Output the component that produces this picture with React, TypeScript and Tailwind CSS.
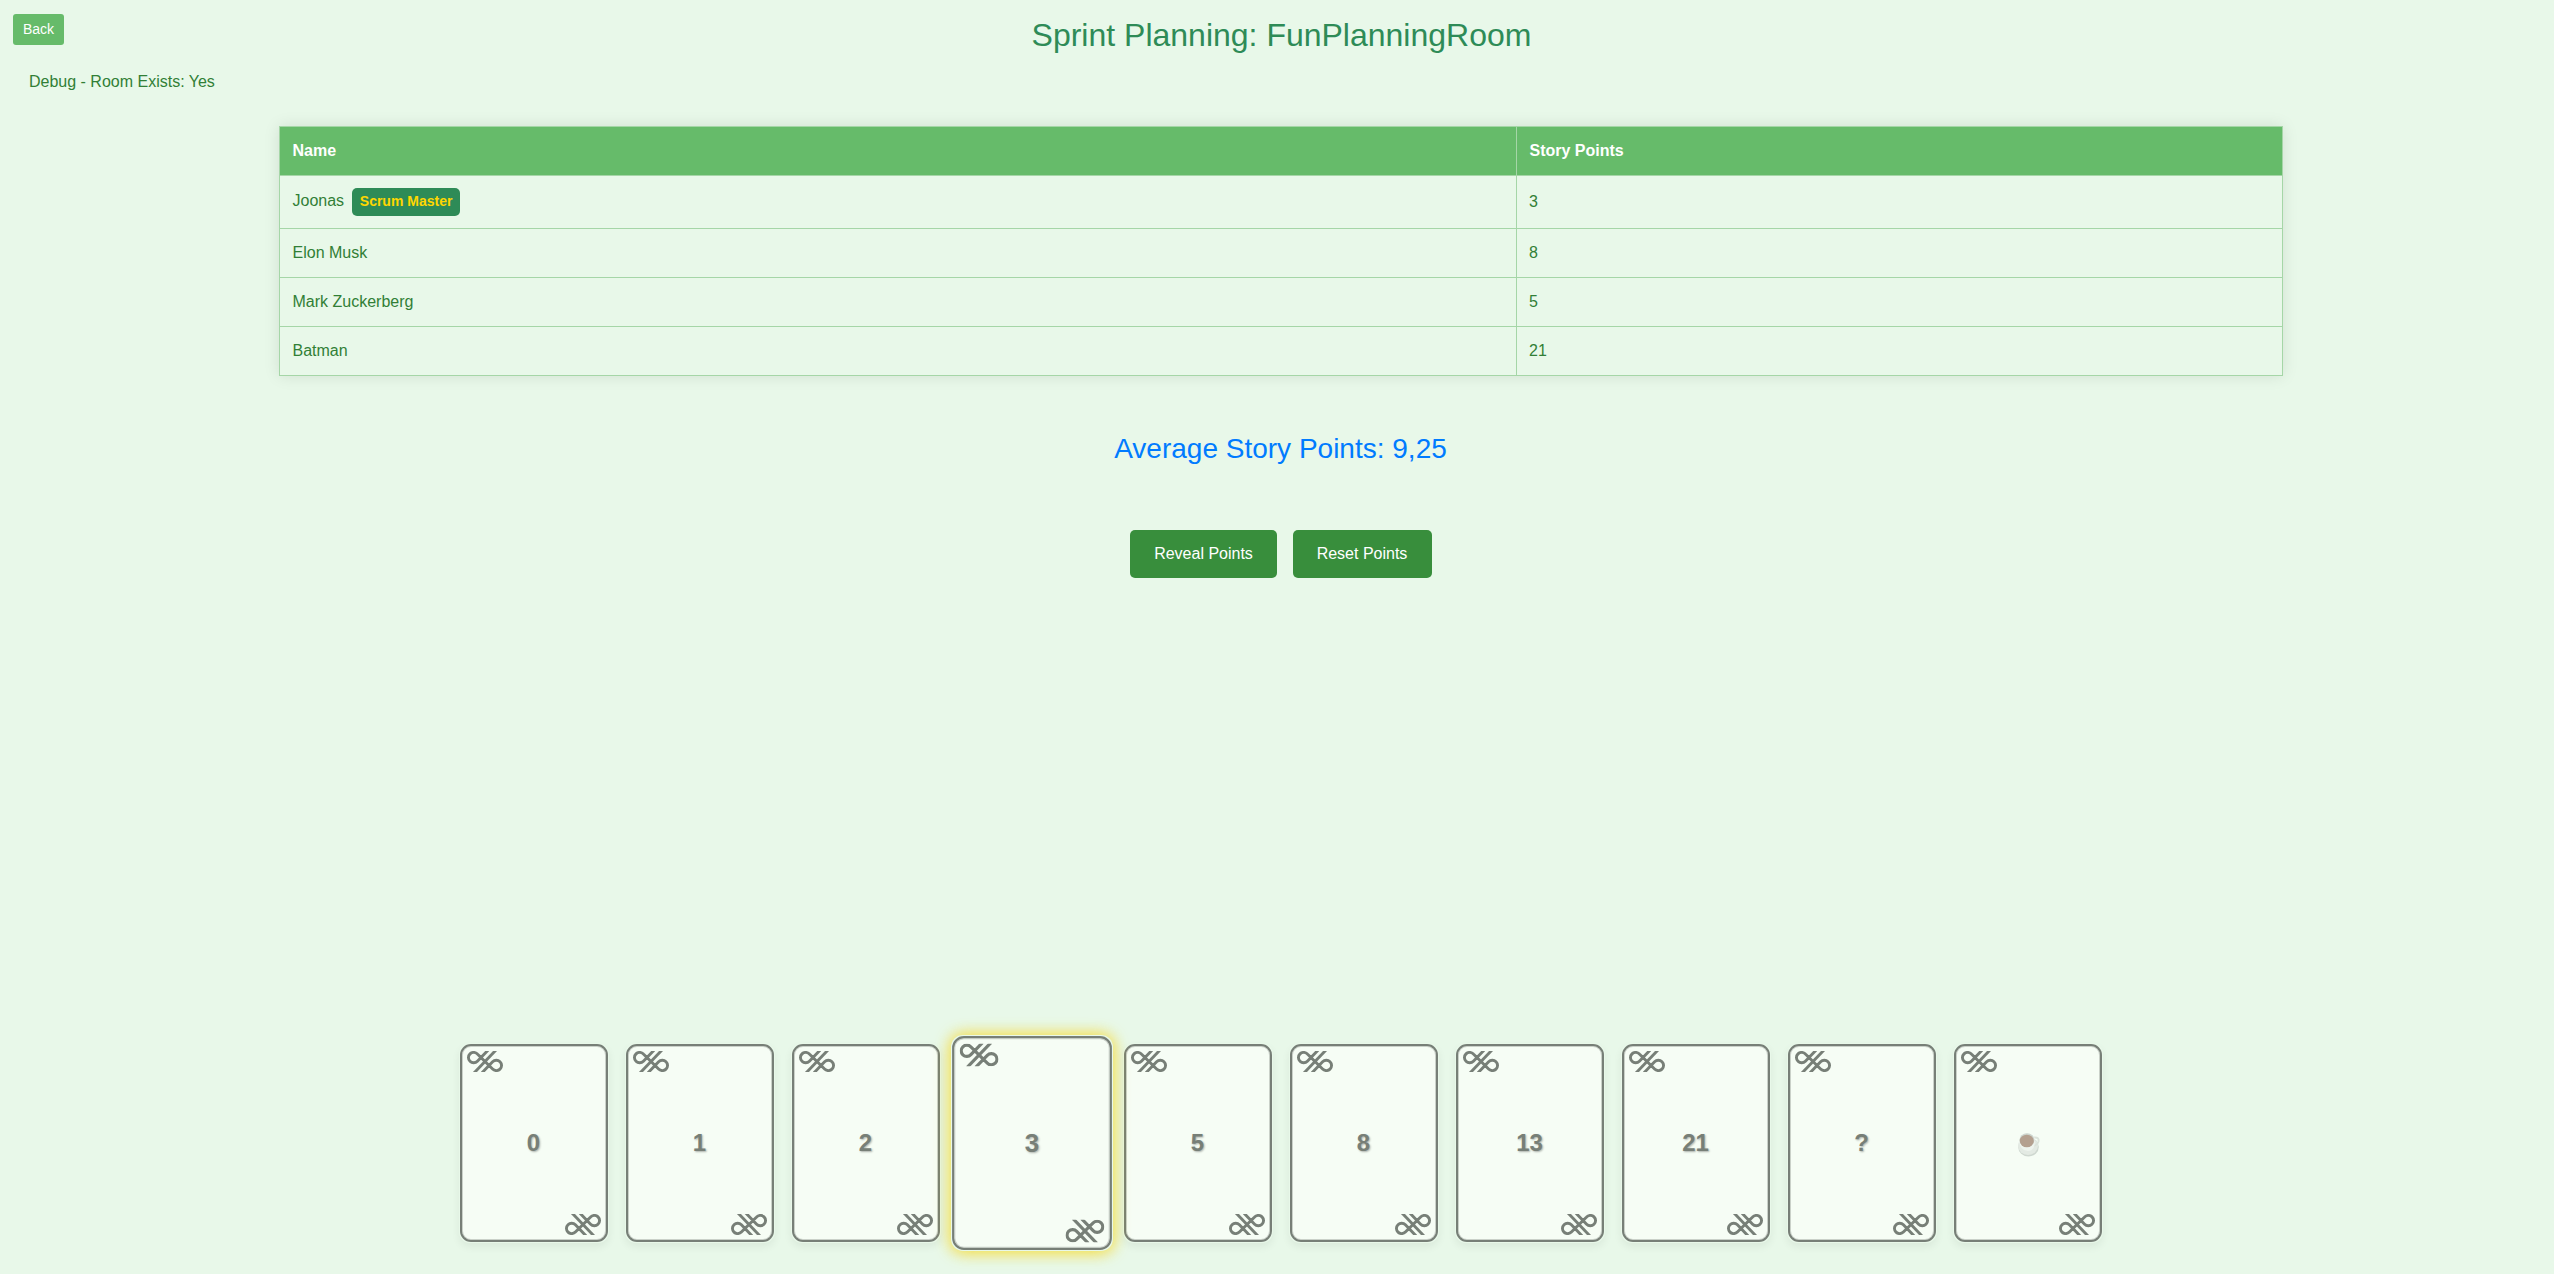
const people = [
  { name: "Joonas", points: "3", master: true },
  { name: "Elon Musk", points: "8" },
  { name: "Mark Zuckerberg", points: "5" },
  { name: "Batman", points: "21" },
];

const cards = ["0", "1", "2", "3", "5", "8", "13", "21", "?", "coffee"];

function Knot({ className }: { className: string }) {
  return (
    <svg viewBox="0 0 36 21" className={className} fill="none" stroke="#777f77" strokeWidth="2.9">
      <path d="M21.200 -1 L10.400 10.200 A5.200 5.200 0 1 1 10.400 3 L25.600 18 A5.200 5.200 0 1 0 25.600 10.800 L14.800 22" />
      <path d="M29 -1 L7 22" />
    </svg>
  );
}

function Cup() {
  return (
    <svg viewBox="0 0 24 26" className="w-6 h-[26px] translate-x-px translate-y-0.5">
      <ellipse cx="11.500" cy="15" rx="10.300" ry="9.500" fill="#cfd8d0" />
      <ellipse cx="11" cy="14" rx="10" ry="9" fill="#e3eae3" />
      <path d="M17 5.500 Q22.500 5 21.500 9.500 Q20 13.500 16 14" fill="none" stroke="#dbe3db" strokeWidth="2" />
      <path d="M2 8 Q3 19 11 19 Q18 19 18 8 Q17 1.500 10 1.500 Q3 1.500 2 8Z" fill="#eef4ee" />
      <ellipse cx="10" cy="8" rx="7.500" ry="6.800" fill="#cdd5ce" />
      <ellipse cx="9.800" cy="9" rx="7" ry="6.300" fill="#b4a08f" />
    </svg>
  );
}

function Card({ value, selected }: { value: string; selected: boolean }) {
  return (
    <div
      className={
        selected
          ? "w-[150px] h-[200px] p-px rounded-[11px] scale-[1.08] shadow-[0_0_15px_rgba(255,215,0,0.6),0_0_15px_rgba(240,205,0,0.4)]"
          : "w-[150px] h-[200px] p-px rounded-[11px] shadow-[0_4px_8px_rgba(0,0,0,0.06)]"
      }
    >
      <div className="size-full rounded-[11px] border-2 border-[#777f77] shadow-[inset_0_0_0_1px_rgba(119,127,119,0.35)] bg-[#f6fdf5] flex flex-col justify-between p-[5px]">
        <Knot className="w-9 h-[21px]" />
        <div className="flex justify-center text-2xl leading-6 font-bold text-[#777f77] [text-shadow:1px_1px_2px_rgba(0,0,0,0.3)]">
          {value === "coffee" ? <Cup /> : value}
        </div>
        <Knot className="w-9 h-[21px] self-end -scale-x-100" />
      </div>
    </div>
  );
}

export default function App() {
  return (
    <div className="h-screen bg-[#e8f8e9] text-[#317f36] text-base pl-[7px] flex flex-col overflow-hidden font-['Liberation_Sans',Arial,sans-serif]">
      <header className="grid grid-cols-[1fr_auto_1fr] items-start pt-3.5">
        <button className="justify-self-start ml-1.5 h-[31px] w-[51px] pb-px rounded-[3px] bg-[#66bb6a] text-white text-sm">Back</button>
        <h1 className="text-[32px] leading-[42px] text-[#2e8b57] translate-x-px">Sprint Planning: FunPlanningRoom</h1>
      </header>
      <p className="ml-[22px] mt-3.5 leading-6">Debug - Room Exists: Yes</p>
      <table className="w-[2004px] mx-auto mt-8 border-collapse shadow-[0_0_15px_rgba(0,0,0,0.1)] text-left">
        <thead>
          <tr className="h-[49px] bg-[#66bb6a] text-white">
            <th className="w-[1237px] border border-[#a5d6a7] px-[13px]">Name</th>
            <th className="border border-[#a5d6a7] px-[13px]">Story Points</th>
          </tr>
        </thead>
        <tbody>
          {people.map((p) => (
            <tr key={p.name} className={p.master ? "h-[53px]" : "h-[49px]"}>
              <td className="border border-[#a5d6a7] px-[13px]">
                {p.name}
                {p.master && (
                  <span className="inline-block ml-2 h-7 w-[108px] text-center rounded-[5px] bg-[#2e8b57] text-[#ffd700] text-sm leading-[27px] font-bold">
                    Scrum Master
                  </span>
                )}
              </td>
              <td className="border border-[#a5d6a7] px-[12.500px]">{p.points}</td>
            </tr>
          ))}
        </tbody>
      </table>
      <h2 className="mt-14 text-center text-[28px] leading-[34px] text-[#007bff]">Average Story Points: 9,25</h2>
      <div className="mt-16 flex justify-center gap-4 text-white">
        <button className="h-12 w-[147px] pl-px rounded-[5px] bg-[#388e3c]">Reveal Points</button>
        <button className="h-12 w-[139px] rounded-[5px] bg-[#388e3c]">Reset Points</button>
      </div>
      <div className="mt-auto mb-[31px] flex justify-center gap-4">
        {cards.map((c) => (
          <Card key={c} value={c} selected={c === "3"} />
        ))}
      </div>
    </div>
  );
}
